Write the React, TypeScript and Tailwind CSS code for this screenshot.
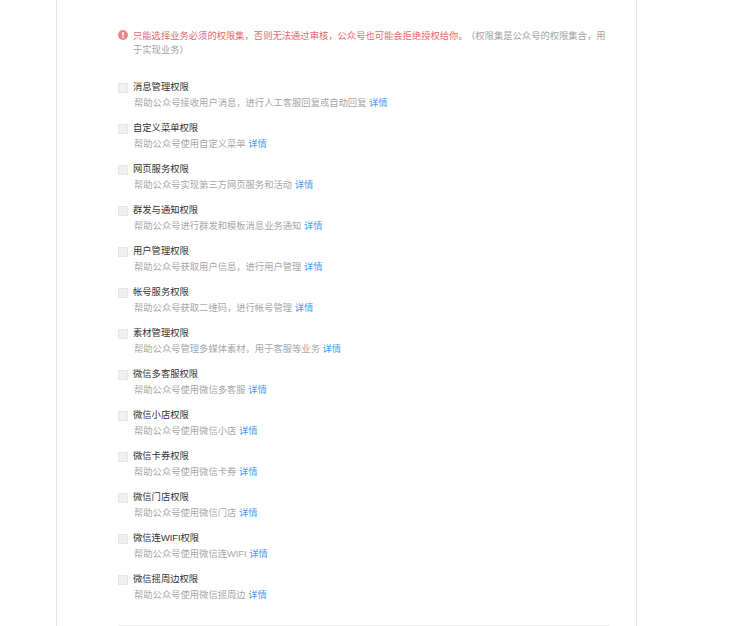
import React from 'react';

interface PermissionItem {
  title: string;
  description: string;
}

const items: PermissionItem[] = [
  { title: '消息管理权限', description: '帮助公众号接收用户消息，进行人工客服回复或自动回复' },
  { title: '自定义菜单权限', description: '帮助公众号使用自定义菜单' },
  { title: '网页服务权限', description: '帮助公众号实现第三方网页服务和活动' },
  { title: '群发与通知权限', description: '帮助公众号进行群发和模板消息业务通知' },
  { title: '用户管理权限', description: '帮助公众号获取用户信息，进行用户管理' },
  { title: '帐号服务权限', description: '帮助公众号获取二维码，进行帐号管理' },
  { title: '素材管理权限', description: '帮助公众号管理多媒体素材，用于客服等业务' },
  { title: '微信多客服权限', description: '帮助公众号使用微信多客服' },
  { title: '微信小店权限', description: '帮助公众号使用微信小店' },
  { title: '微信卡券权限', description: '帮助公众号使用微信卡券' },
  { title: '微信门店权限', description: '帮助公众号使用微信门店' },
  { title: '微信连WIFI权限', description: '帮助公众号使用微信连WIFI' },
  { title: '微信摇周边权限', description: '帮助公众号使用微信摇周边' },
];

export default function App() {
  return (
    <div className="h-[626px] overflow-hidden bg-white font-['Liberation_Sans','Noto_Sans_CJK_SC',sans-serif]">
      <div className="ml-[56px] h-full w-[581px] border-x border-[#e8e8e8] pl-[61px] pr-[26px] pt-[29px]">
        <div className="flex text-[9.3px] leading-[14px] text-[#a3a3a3]">
          <svg className="mt-[1px] mr-[5px] h-[10px] w-[10px] shrink-0" viewBox="0 0 10 10">
            <circle cx="5" cy="5" r="5" fill="#e98585" />
            <rect x="4.2" y="2" width="1.6" height="3.8" rx="0.6" fill="#fff" />
            <rect x="4.2" y="6.6" width="1.6" height="1.5" rx="0.6" fill="#fff" />
          </svg>
          <p>
            <span className="text-[#e56a6a]">只能选择业务必须的权限集，否则无法通过审核，公众号也可能会拒绝授权给你。</span>
            <span className="ml-[3px]">（权限集是公众号的权限集合，用于实现业务）</span>
          </p>
        </div>
        <ul className="mt-[23px] flex flex-col gap-[11px]">
          {items.map((item) => (
            <li key={item.title} className="flex">
              <span className="mt-[3px] mr-[5px] h-[10px] w-[10px] shrink-0 border border-[#e6e6e6] bg-[#f0f0f0]" />
              <div className="text-[9.3px] leading-[14px]">
                <div className="text-[#333333]">{item.title}</div>
                <div className="mt-[2px] pl-[1px] text-[#a8a8a8]">
                  {item.description} <a className="text-[#4a9af5]">详情</a>
                </div>
              </div>
            </li>
          ))}
        </ul>
        <div className="mt-[23px] border-t border-[#eeeeee]" />
      </div>
    </div>
  );
}
